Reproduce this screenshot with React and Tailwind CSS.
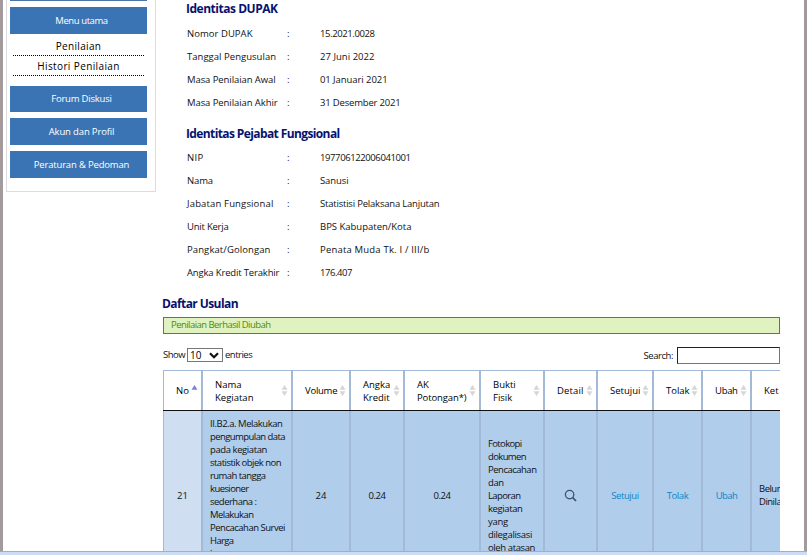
import React from "react";

const dupak = [
  ["Nomor DUPAK", "tracking-[0.04px]", "15.2021.0028", "tracking-[-0.4px]"],
  ["Tanggal Pengusulan", "tracking-[0.03px]", "27 Juni 2022", "tracking-[0.03px]"],
  ["Masa Penilaian Awal", "tracking-[-0.08px]", "01 Januari 2021", "tracking-[-0.07px]"],
  ["Masa Penilaian Akhir", "tracking-[-0.08px]", "31 Desember 2021", "tracking-[-0.18px]"],
];

const pejabat = [
  ["NIP", "tracking-[0.3px]", "197706122006041001", "tracking-[-0.4px]"],
  ["Nama", "tracking-[-0.15px]", "Sanusi", "tracking-[-0.1px]"],
  ["Jabatan Fungsional", "tracking-[0.15px]", "Statistisi Pelaksana Lanjutan", "tracking-[-0.2px]"],
  ["Unit Kerja", "tracking-[-0.22px]", "BPS Kabupaten/Kota", "tracking-[-0.01px]"],
  ["Pangkat/Golongan", "tracking-[0.1px]", "Penata Muda Tk. I / III/b", "tracking-[0.19px]"],
  ["Angka Kredit Terakhir", "tracking-[-0.16px]", "176.407", "tracking-[-0.45px]"],
];

const headers = [
  [["No"], "tracking-[0px]"],
  [["Nama", "Kegiatan"], "tracking-[0px]"],
  [["Volume"], "tracking-[-0.25px]"],
  [["Angka", "Kredit"], "tracking-[0px]"],
  [["AK", "Potongan*)"], "tracking-[-0.12px]"],
  [["Bukti", "Fisik"], "tracking-[0px]"],
  [["Detail"], "tracking-[0.13px]"],
  [["Setujui"], "tracking-[0.02px]"],
  [["Tolak"], "tracking-[-0.03px]"],
  [["Ubah"], "tracking-[-0.3px]"],
  [["Ket"], "tracking-[0px]"],
];

const kegiatan = [
  ["II.B2.a. Melakukan", "tracking-[-0.45px]"],
  ["pengumpulan data", "tracking-[-0.57px]"],
  ["pada kegiatan", "tracking-[-0.41px]"],
  ["statistik objek non", "tracking-[-0.52px]"],
  ["rumah tangga", "tracking-[-0.56px]"],
  ["kuesioner", "tracking-[-0.59px]"],
  ["sederhana :", "tracking-[-0.51px]"],
  ["Melakukan", "tracking-[-0.55px]"],
  ["Pencacahan Survei", "tracking-[-0.49px]"],
  ["Harga", "tracking-[-0.62px]"],
  ["konsumen", "tracking-[-0.5px]"],
];

const bukti = [
  ["Fotokopi", "tracking-[-0.64px]"],
  ["dokumen", "tracking-[-0.62px]"],
  ["Pencacahan", "tracking-[-0.5px]"],
  ["dan", "tracking-[-0.4px]"],
  ["Laporan", "tracking-[-0.61px]"],
  ["kegiatan", "tracking-[-0.39px]"],
  ["yang", "tracking-[-0.3px]"],
  ["dilegalisasi", "tracking-[-0.33px]"],
  ["oleh atasan", "tracking-[-0.39px]"],
];

function MenuButton({ children, className }) {
  return (
    <div className={`flex items-center justify-center bg-[#3b74b5] pl-1.5 pt-px text-[9.5px] font-medium text-white ${className}`}>
      {children}
    </div>
  );
}

function InfoTable({ rows }) {
  return (
    <div className="ml-[24px]">
      {rows.map(([label, labelTrack, value, valueTrack]) => (
        <div key={label} className="grid h-[23px] grid-cols-[100px_33px_1fr] items-center">
          <span className={labelTrack}>{label}</span>
          <span>:</span>
          <span className={valueTrack}>{value}</span>
        </div>
      ))}
    </div>
  );
}

function SortIcon({ ascending }) {
  return (
    <svg width="7" height="11" viewBox="0 0 7 11" className="mr-px shrink-0">
      <path d="M0.5 4.8L3.5 0L6.5 4.8Z" fill={ascending ? "#7d80d6" : "#d6d6d6"} />
      {!ascending && <path d="M0.5 6.2L3.5 11L6.5 6.2Z" fill="#d6d6d6" />}
    </svg>
  );
}

const columns = "grid grid-cols-[40px_90px_58px_54px_76px_64px_53px_56px_49px_49px_28px]";
const divider = "border-r-2 border-[#a3b9d8] first:border-l last:border-r-0";

function Cell({ children, className = "" }) {
  return <div className={`flex flex-col overflow-hidden ${divider} ${className}`}>{children}</div>;
}

function Lines({ lines }) {
  return lines.map(([text, track]) => (
    <span key={text} className={`shrink-0 ${track}`}>{text}</span>
  ));
}

export default function App() {
  return (
    <div className="flex h-[555px] w-[807px] flex-col overflow-hidden whitespace-nowrap bg-white font-['Open_Sans','Noto_Sans',sans-serif] text-[9.5px] text-[#111]">
      <div className="flex h-[551px] overflow-hidden border-x-[3px] border-[#a29a9b]">
        <aside className="ml-[3px] h-[192px] w-[150px] shrink-0 border border-t-0 border-[#dcdce0] pl-[3px]">
          <div className="flex w-[137px] flex-col">
            <div className="h-px bg-[#4a76a8]" />
            <MenuButton className="mt-1.5 h-[27px] tracking-[-0.41px]">Menu utama</MenuButton>
            <div className="ml-[3px] mt-[5px] h-[17px] w-[131px] border-b border-dotted border-black pt-px text-center text-[10px] leading-[13px] tracking-[0.32px] text-black">
              Penilaian
            </div>
            <div className="ml-[3px] h-[20px] w-[131px] border-b border-dotted border-black pt-[3px] text-center text-[10px] leading-[14px] tracking-[0.38px] text-black">
              Histori Penilaian
            </div>
            <MenuButton className="mt-2.5 h-[26px] tracking-[-0.2px]">Forum Diskusi</MenuButton>
            <MenuButton className="mt-1.5 h-[27px] tracking-[-0.15px]">Akun dan Profil</MenuButton>
            <MenuButton className="mt-1.5 h-[27px] tracking-[-0.17px]">Peraturan &amp; Pedoman</MenuButton>
          </div>
        </aside>

        <main className="ml-[7px] w-[617px] shrink-0">
          <h2 className="ml-[23px] mb-[6px] h-[17px] text-[12px] font-bold leading-[17px] tracking-[-0.48px] text-[#06126e]">
            Identitas DUPAK
          </h2>
          <InfoTable rows={dupak} />
          <h2 className="ml-[23px] mt-[10px] mb-[5px] h-[17px] text-[12px] font-bold leading-[17px] tracking-[-0.61px] text-[#06126e]">
            Identitas Pejabat Fungsional
          </h2>
          <InfoTable rows={pejabat} />
          <h2 className="-ml-px mt-[10px] mb-[5px] h-[17px] text-[12px] font-bold leading-[17px] tracking-[-0.58px] text-[#06126e]">
            Daftar Usulan
          </h2>
          <div className="h-[17px] border border-[#568528] bg-[#dff2bf] pl-[7px] leading-[14px] tracking-[-0.55px] text-[#4f8a10]">
            Penilaian Berhasil Diubah
          </div>

          <div className="mt-[13px] flex h-[23px] items-start justify-between">
            <div className="flex items-center pt-px">
              <span className="w-[24px] tracking-[-0.53px]">Show</span>
              <span className="flex h-[14px] w-[36px] items-center justify-between border border-[#767676] pl-[2px] pr-[3px] text-[10px] text-black">
                10
                <svg width="10" height="7" viewBox="0 0 10 7" fill="none" stroke="#111" strokeWidth="2.2">
                  <path d="M1 1.2L5 5.2L9 1.2" />
                </svg>
              </span>
              <span className="ml-[2px] tracking-[-0.5px]">entries</span>
            </div>
            <div className="flex items-center">
              <span className="mr-1 pt-px tracking-[-0.44px]">Search:</span>
              <span className="h-[17px] w-[103px] border border-b-[#767676] border-l-[#222] border-r-[#767676] border-t-[#222]" />
            </div>
          </div>

          <div className="overflow-hidden">
            <div className={`${columns} h-[41px] border-b border-b-[#111] font-medium text-black`}>
              {headers.map(([lines, track], i) => (
                <div
                  key={lines[0]}
                  className={`flex items-center justify-between overflow-hidden border-t pl-3 pr-[2px] leading-[13px] ${divider} ${track}`}
                >
                  <span className="flex w-0 flex-col">
                    {lines.map((line) => (
                      <span key={line}>{line}</span>
                    ))}
                  </span>
                  {i < headers.length - 1 && <SortIcon ascending={i === 0} />}
                </div>
              ))}
            </div>
            <div className={`${columns} h-[140px] bg-[#b0cdeb] leading-[13px]`}>
              <Cell className="items-center bg-[#cfdff1] pt-[78px]">21</Cell>
              <Cell className="pl-[7px] pt-[6px]">
                <Lines lines={kegiatan} />
              </Cell>
              <Cell className="items-center pt-[78px]">24</Cell>
              <Cell className="items-center pt-[78px] tracking-[-0.4px]">0.24</Cell>
              <Cell className="items-center pt-[78px] tracking-[-0.4px]">0.24</Cell>
              <Cell className="pl-[7px] pt-[26px]">
                <Lines lines={bukti} />
              </Cell>
              <Cell className="items-center pt-[78px]">
                <svg width="13" height="13" viewBox="0 0 13 13" fill="none" stroke="#3c526b">
                  <circle cx="5.6" cy="5.6" r="4.2" strokeWidth="1.3" />
                  <path d="M8.7 8.7L12 12" strokeWidth="1.7" />
                </svg>
              </Cell>
              <Cell className="items-center pt-[78px] tracking-[-0.41px] text-[#0a86c8]">Setujui</Cell>
              <Cell className="items-center pt-[78px] tracking-[-0.42px] text-[#0a86c8]">Tolak</Cell>
              <Cell className="items-center pt-[78px] tracking-[-0.59px] text-[#0a86c8]">Ubah</Cell>
              <Cell className="pl-[7px] pt-[71px] tracking-[-0.5px]">
                <span>Belum</span>
                <span>Dinilai</span>
              </Cell>
            </div>
          </div>
        </main>
      </div>
      <footer className="h-[4px] border-t border-[#9bb0cf] bg-[#cddcf5]" />
    </div>
  );
}
